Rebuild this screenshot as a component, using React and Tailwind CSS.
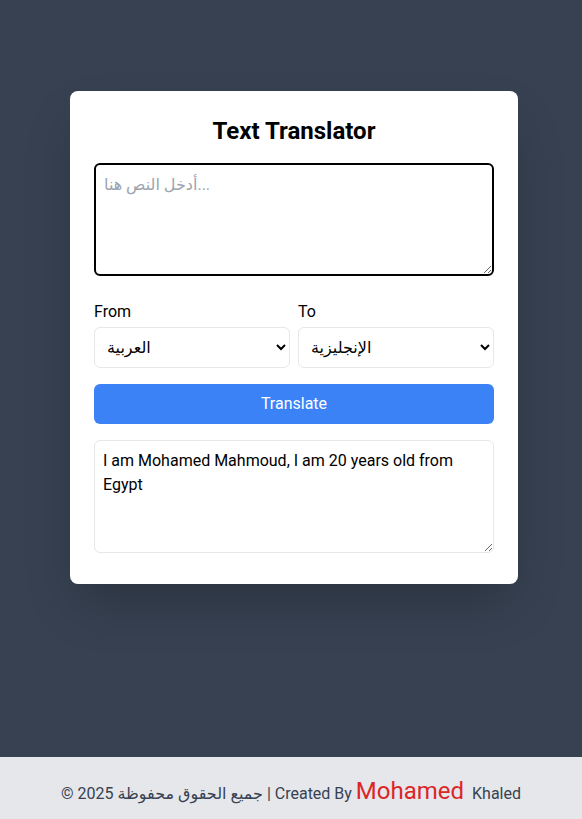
import React, { useState } from 'react';

export default function App() {
  const [source, setSource] = useState('');
  const [from, setFrom] = useState('ar');
  const [to, setTo] = useState('en');
  const result = 'I am Mohamed Mahmoud, I am 20 years old from Egypt';

  return (
    <div className="min-h-screen flex flex-col bg-[#374151]" style={{ fontFamily: 'Roboto, "DejaVu Sans", sans-serif' }}>
      <main className="h-[757px] flex justify-center pt-[91px] pl-[6px]">
        <div className="w-[448px] h-fit bg-white rounded-lg shadow-2xl px-6 pt-6 pb-[31px]">
          <h1 className="text-2xl font-bold text-center text-black mb-4">Text Translator</h1>

          {/* Input */}
          <textarea
            value={source}
            onChange={(e) => setSource(e.target.value)}
            placeholder="أدخل النص هنا..."
            className="block w-full h-[113px] p-2 border-2 border-black rounded-md text-base placeholder:text-[#9ca3af] outline-none mb-6"
          />

          {/* Languages */}
          <div className="grid grid-cols-2 gap-2">
            <div className="flex flex-col">
              <label className="text-base text-black mb-[3px]">From</label>
              <select
                value={from}
                onChange={(e) => setFrom(e.target.value)}
                className="h-[41px] px-2 border border-[#e5e7eb] rounded-md bg-white text-black text-base"
              >
                <option value="ar">العربية</option>
                <option value="en">الإنجليزية</option>
              </select>
            </div>
            <div className="flex flex-col">
              <label className="text-base text-black mb-[3px]">To</label>
              <select
                value={to}
                onChange={(e) => setTo(e.target.value)}
                className="h-[41px] px-2 border border-[#e5e7eb] rounded-md bg-white text-black text-base"
              >
                <option value="en">الإنجليزية</option>
                <option value="ar">العربية</option>
              </select>
            </div>
          </div>

          <button className="w-full h-10 mt-4 bg-[#3b82f6] text-white rounded-md text-base">Translate</button>

          {/* Output */}
          <textarea
            readOnly
            value={result}
            className="block w-full h-[113px] mt-4 p-2 border border-[#e5e7eb] rounded-md text-base text-black outline-none"
          />
        </div>
      </main>

      <footer className="h-[62px] pt-[6px] bg-[#e5e7eb] flex items-center justify-center text-[#374151] text-base">
        <p>
          © 2025 جميع الحقوق محفوظة | Created By <span className="text-2xl text-[#dc2626] mr-1">Mohamed</span> Khaled
        </p>
      </footer>
    </div>
  );
}
